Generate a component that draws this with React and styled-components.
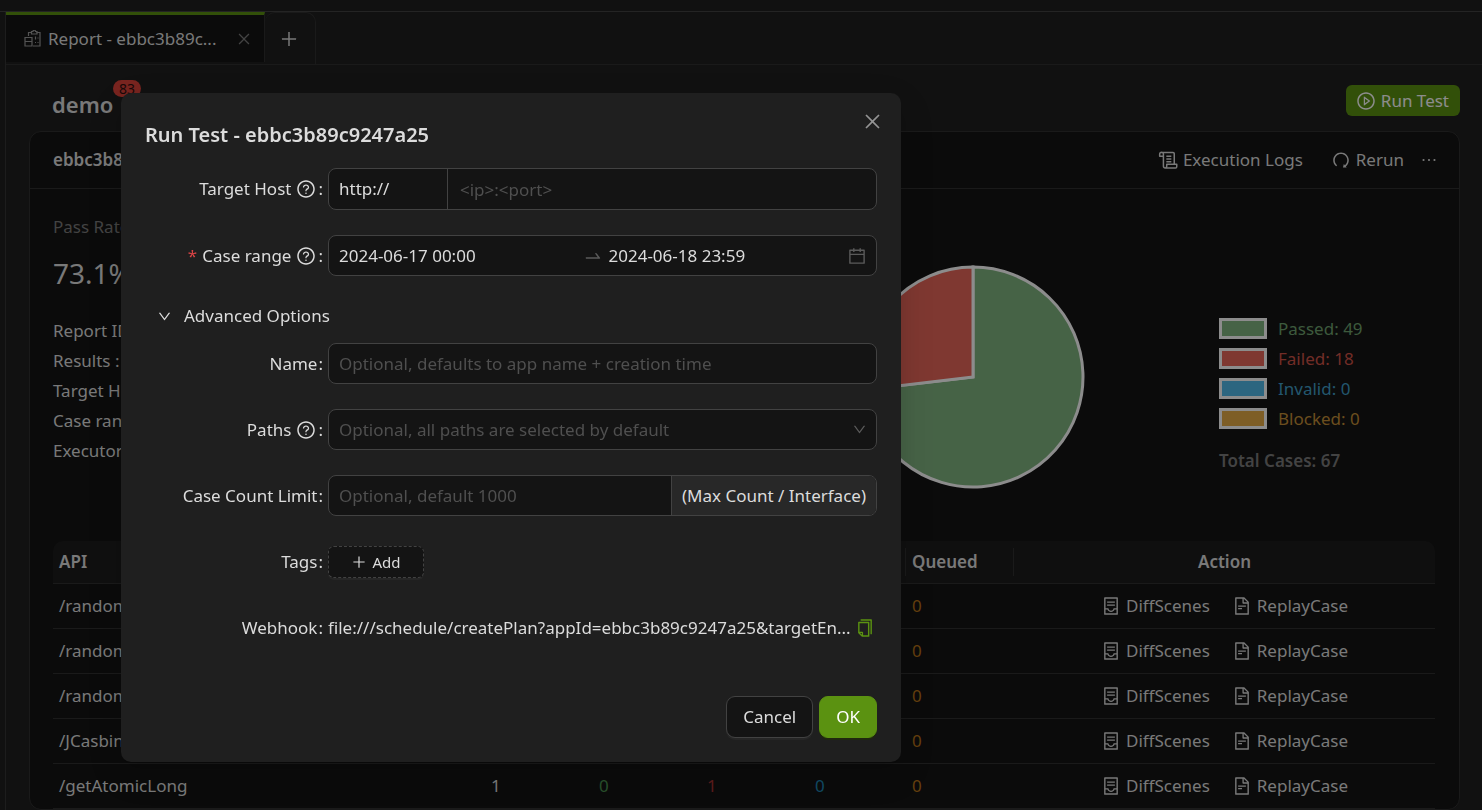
import React from "react";
import styled, { createGlobalStyle } from "styled-components";
import {
  AiOutlineCalendar,
  AiOutlineClose,
  AiOutlineContainer,
  AiOutlineCopy,
  AiOutlineDown,
  AiOutlineEllipsis,
  AiOutlineFileText,
  AiOutlinePlayCircle,
  AiOutlinePlus,
  AiOutlineQuestionCircle,
  AiOutlineRedo,
  AiOutlineSwapRight,
} from "react-icons/ai";

const GlobalStyle = createGlobalStyle`
  * { box-sizing: border-box; }
  body {
    margin: 0;
    background: #1f1f1f;
    color: #dcdcdc;
    font-family: "Noto Sans", "Open Sans", sans-serif;
    font-size: 17px;
    line-height: 28px;
  }
  button, input, select { font: inherit; color: inherit; }
  button { cursor: pointer; }
  svg { flex: none; display: block; }
`;

const Page = styled.div`
  height: 100vh;
  overflow: hidden;
  padding-left: 5px;
  display: flex;
  flex-direction: column;
`;

const TopStrip = styled.div`
  flex: none;
  height: 12px;
  margin-left: -5px;
  border-bottom: 1px solid #424242;
`;

const Workspace = styled.main`
  flex: 1;
  min-height: 0;
  border-left: 1px solid #363636;
`;

const TabBar = styled.div`
  display: flex;
  height: 53px;
  border-bottom: 1px solid #303030;
`;

const Tab = styled.div`
  display: flex;
  align-items: center;
  width: 259px;
  height: 50px;
  padding: 0 12px 0 18px;
  background: #141414;
  border-top: 3px solid #5b9211;
  border-right: 1px solid #303030;
`;

const TabLabel = styled.button`
  flex: 1;
  min-width: 0;
  display: flex;
  align-items: center;
  gap: 7px;
  padding: 0;
  border: 0;
  background: none;
`;

const IconButton = styled.button`
  display: flex;
  padding: 0;
  border: 0;
  background: none;
  color: ${(p) => p.$color || "#dcdcdc"};
`;

const AddTab = styled.button`
  display: flex;
  align-items: center;
  justify-content: center;
  width: 51px;
  padding: 0 3px 0 0;
  border: 1px solid #303030;
  border-width: 1px 1px 0 0;
  border-radius: 10px 10px 0 0;
  background: none;
`;

const Content = styled.div`
  padding: 20px 22px 0 23px;
`;

const PageHeader = styled.header`
  display: flex;
  justify-content: space-between;
  height: 46px;
`;

const AppTitle = styled.h1`
  position: relative;
  margin: 3px 0 0 23px;
  height: 32px;
  font-size: 22px;
  line-height: 32px;
  font-weight: 600;
`;

const Badge = styled.sup`
  position: absolute;
  left: 61px;
  top: -8px;
  padding: 0 6px;
  border-radius: 9px;
  background: #dc4239;
  color: #2c1010;
  font-size: 14px;
  font-weight: 400;
  line-height: 17px;
`;

const RunButton = styled.button`
  display: flex;
  align-items: center;
  gap: 5px;
  height: 31px;
  padding: 0 11px 0 10px;
  border: 0;
  border-radius: 6px;
  background: #5b9211;
  color: #fff;
`;

const Card = styled.section`
  border: 1px solid #303030;
  border-radius: 12px;
  background: #141414;
`;

const CardHeader = styled.header`
  display: flex;
  align-items: center;
  justify-content: space-between;
  height: 57px;
  padding: 0 20px 0 23px;
  border-bottom: 1px solid #303030;
`;

const CardTitle = styled.h2`
  margin: 0;
  font-size: 17px;
  font-weight: 600;
`;

const Actions = styled.div`
  display: flex;
  align-items: center;
  justify-content: ${(p) => (p.$center ? "center" : "flex-end")};
  gap: ${(p) => p.$gap}px;
`;

const TextButton = styled.button`
  display: flex;
  align-items: center;
  gap: 5px;
  padding: 0;
  border: 0;
  background: none;
`;

const CardBody = styled.div`
  padding: 24px 24px 0 23px;
`;

const Summary = styled.div`
  display: flex;
  height: 328px;
`;

const Stats = styled.div`
  flex: 1;
`;

const StatTitle = styled.div`
  color: #7a7a7a;
`;

const StatValue = styled.div`
  margin: 12px 0 23px;
  font-size: 28px;
  line-height: 40px;
`;

const Details = styled.ul`
  margin: 0;
  padding: 0;
  list-style: none;
  line-height: 30px;
`;

const Chart = styled.div`
  display: flex;
  align-items: center;
  gap: 134px;
`;

const Legend = styled.div`
  width: 216px;
  padding-top: 34px;
`;

const LegendItem = styled.div`
  display: flex;
  align-items: center;
  gap: 11px;
  height: 30px;
  color: ${(p) => p.$color};
`;

const Swatch = styled.span`
  width: 48px;
  height: 21px;
  border: 3px solid #fff;
  background: ${(p) => p.$color};
`;

const Total = styled.div`
  margin-top: 13px;
  color: #7a7a7a;
  font-weight: 600;
`;

const Table = styled.table`
  width: 100%;
  table-layout: fixed;
  border-collapse: separate;
  border-spacing: 0;
`;

const HeadCell = styled.th`
  height: 43px;
  padding: 0 6px;
  background: #1d1d1d;
  border-bottom: 1px solid #303030;
  text-align: ${(p) => (p.$center ? "center" : "left")};
  font-weight: 600;
  &:first-child { border-top-left-radius: 10px; }
  &:last-child { border-top-right-radius: 10px; }
`;

const HeadLabel = styled.span`
  display: block;
  margin-right: -6px;
  border-right: ${(p) => (p.$divider ? "1px solid #303030" : "0")};
`;

const Cell = styled.td`
  height: 45px;
  padding: 0 6px;
  border-bottom: 1px solid #303030;
  color: ${(p) => p.$color || "#dcdcdc"};
`;

const Mask = styled.div`
  position: fixed;
  inset: 0;
  display: flex;
  align-items: flex-start;
  padding: 93px 0 0 121px;
  background: rgba(0, 0, 0, 0.45);
`;

const Modal = styled.div`
  position: relative;
  width: 780px;
  padding: 26px 24px 24px;
  border-radius: 10px;
  background: #1f1f1f;
  box-shadow: 0 8px 20px rgba(0, 0, 0, 0.1), 0 4px 8px -6px rgba(0, 0, 0, 0.15),
    0 12px 36px 10px rgba(0, 0, 0, 0.07);
`;

const ModalTitle = styled.h2`
  margin: 0 0 17px;
  font-size: 20px;
  line-height: 32px;
  font-weight: 600;
`;

const CloseCorner = styled.div`
  position: absolute;
  top: 18px;
  right: 18px;
`;

const Form = styled.form`
  display: grid;
  row-gap: 25px;
`;

const Field = styled.div`
  display: grid;
  grid-template-columns: 1fr 3fr;
  align-items: center;
  min-height: 41px;
`;

const Label = styled.label`
  display: flex;
  align-items: center;
  justify-content: flex-end;
  gap: 5px;
  padding-right: 5px;
`;

const Required = styled.span`
  color: #dc4446;
`;

const Colon = styled.span`
  margin-left: ${(p) => (p.$tight ? "-3px" : "-4px")};
`;

const Box = styled.div`
  position: relative;
  display: flex;
  align-items: center;
  height: ${(p) => (p.$tall ? "42px" : "41px")};
  border: 1px solid #424242;
  border-radius: 8px;
  background: #141414;
  overflow: hidden;
`;

const TextInput = styled.input`
  flex: 1;
  min-width: 0;
  height: 100%;
  padding: 0 10px;
  border: 0;
  outline: 0;
  background: none;
  &::placeholder { color: #4f4f4f; opacity: 1; }
`;

const Select = styled.select`
  width: ${(p) => p.$width || "100%"};
  height: 100%;
  padding: 0 10px;
  border: 0;
  outline: 0;
  appearance: none;
  background: none;
  color: ${(p) => (p.$placeholder ? "#4f4f4f" : "#dcdcdc")};
`;

const HostInput = styled(TextInput)`
  padding-left: 12px;
  border-left: 1px solid #424242;
`;

const RangeEnd = styled(TextInput)`
  flex: none;
  width: 50%;
  padding-left: 6px;
`;

const Suffix = styled.span`
  display: flex;
  color: #5a5a5a;
`;

const EndSuffix = styled(Suffix)`
  position: absolute;
  right: 9px;
  pointer-events: none;
`;

const Addon = styled.span`
  display: flex;
  align-items: center;
  height: 100%;
  padding: 0 10px;
  border-left: 1px solid #424242;
  background: #282828;
`;

const AdvancedToggle = styled.button`
  display: flex;
  align-items: center;
  gap: 12px;
  height: 30px;
  margin-bottom: -13px;
  padding: 0 0 0 12px;
  border: 0;
  background: none;
`;

const AddButton = styled.button`
  display: flex;
  align-items: center;
  justify-content: center;
  gap: 5px;
  width: 96px;
  height: 32px;
  padding: 0;
  border: 1px dashed #424242;
  border-radius: 6px;
  background: #141414;
  box-shadow: 0 2px 0 #262626;
  font-size: 15px;
`;

const Webhook = styled.div`
  display: flex;
  align-items: center;
  gap: 4px;
  white-space: nowrap;
`;

const Footer = styled.footer`
  display: flex;
  justify-content: flex-end;
  gap: 6px;
  margin-top: 48px;
`;

const Button = styled.button`
  height: 42px;
  padding: 0 16px;
  border: 1px solid ${(p) => (p.$primary ? "#5b9211" : "#424242")};
  border-radius: 9px;
  background: ${(p) => (p.$primary ? "#5b9211" : "#141414")};
  color: ${(p) => (p.$primary ? "#fff" : "#dcdcdc")};
  box-shadow: 0 2px 0 ${(p) => (p.$primary ? "#20280f" : "#262626")};
`;

function ReportIcon() {
  return (
    <svg width="17" height="17" viewBox="0 0 17 17" fill="none" stroke="#9a9a9a" strokeWidth="1.2">
      <path d="M4.5 6V2.5H7M12.500 2.500H16v13.500H9" />
      <path d="M7.500 4V1.500H9a1.200 1.200 0 0 1 2.500 0H13V4Z" />
      <path d="M1 7.500h7V16H1ZM1 11.500h7" />
      <path d="M11.500 6.500v3M11 12.500h1M13.500 12.500h1M13.500 8h1" />
    </svg>
  );
}

function LogsIcon() {
  return (
    <svg width="20" height="20" viewBox="0 0 24 24" fill="none" stroke="currentColor" strokeWidth="1.8" strokeLinejoin="round">
      <path d="M19.500 17V4.500a1.500 1.500 0 0 0-1.500-1.500H4M8 21.500h13a1.500 1.500 0 0 0 1.500-1.500v-3H10.500v2.500a2 2 0 0 1-4 0V5a2 2 0 1 0-4.500 0v2.500h4" />
      <path d="M10 7.500h6M10 10.700h6M10 14h6" />
    </svg>
  );
}

function PieChart({ passed, failed }) {
  const angle = (passed / (passed + failed)) * Math.PI * 2;
  const x = 112 + 110 * Math.sin(angle);
  const y = 112 - 110 * Math.cos(angle);
  return (
    <svg width="224" height="224" viewBox="0 0 224 224" stroke="#fff" strokeWidth="3">
      <path fill="#80b480" d={`M112 112V2A110 110 0 1 1 ${x} ${y}Z`} />
      <path fill="#e76659" d={`M112 112L${x} ${y}A110 110 0 0 1 112 2Z`} />
    </svg>
  );
}

const legend = [
  ["Passed", 49, "#80b480", "#6fa36f"],
  ["Failed", 18, "#e76659", "#d05348"],
  ["Invalid", 0, "#50bbe9", "#409fc8"],
  ["Blocked", 0, "#e5ab45", "#c48f38"],
];

const details = ["Report ID:", "Results :", "Target Host:", "Case range:", "Executor:"];

const columns = ["Cases", "Passed", "Failed", "Invalid", "Queued"];

const rows = [
  ["/randomInt", 1, 1, 0, 0, 0],
  ["/randomLong", 1, 1, 0, 0, 0],
  ["/randomUser", 1, 1, 0, 0, 0],
  ["/JCasbin", 1, 1, 0, 0, 0],
  ["/getAtomicLong", 1, 0, 1, 0, 0],
];

const countColors = ["#dcdcdc", "#49914f", "#a83232", "#1f86b4", "#b87318"];

function FormField({ label, htmlFor, help, required, children }) {
  return (
    <Field>
      <Label htmlFor={htmlFor}>
        {required && <Required>*</Required>}
        {label}
        {help && <AiOutlineQuestionCircle size={20} />}
        <Colon $tight={help}>:</Colon>
      </Label>
      {children}
    </Field>
  );
}

function RunTestModal() {
  return (
    <Mask>
      <Modal role="dialog" aria-labelledby="run-test-title">
        <ModalTitle id="run-test-title">Run Test - ebbc3b89c9247a25</ModalTitle>
        <CloseCorner>
          <IconButton aria-label="Close" $color="#949494">
            <AiOutlineClose size={21} />
          </IconButton>
        </CloseCorner>
        <Form onSubmit={(e) => e.preventDefault()}>
          <FormField label="Target Host" htmlFor="host" help>
            <Box $tall>
              <Select aria-label="Protocol" $width="118px">
                <option>http://</option>
                <option>https://</option>
              </Select>
              <HostInput id="host" placeholder="<ip>:<port>" />
            </Box>
          </FormField>
          <FormField label="Case range" htmlFor="range-start" help required>
            <Box>
              <TextInput id="range-start" defaultValue="2024-06-17 00:00" />
              <Suffix>
                <AiOutlineSwapRight size={20} />
              </Suffix>
              <RangeEnd aria-label="Range end" defaultValue="2024-06-18 23:59" />
              <EndSuffix>
                <AiOutlineCalendar size={20} />
              </EndSuffix>
            </Box>
          </FormField>
          <AdvancedToggle type="button" aria-expanded="true">
            <AiOutlineDown size={15} />
            Advanced Options
          </AdvancedToggle>
          <FormField label="Name" htmlFor="name">
            <Box>
              <TextInput id="name" placeholder="Optional, defaults to app name + creation time" />
            </Box>
          </FormField>
          <FormField label="Paths" htmlFor="paths" help>
            <Box>
              <Select id="paths" $placeholder>
                <option>Optional, all paths are selected by default</option>
              </Select>
              <EndSuffix>
                <AiOutlineDown size={15} />
              </EndSuffix>
            </Box>
          </FormField>
          <FormField label="Case Count Limit" htmlFor="limit">
            <Box>
              <TextInput id="limit" placeholder="Optional, default 1000" />
              <Addon>(Max Count / Interface)</Addon>
            </Box>
          </FormField>
          <FormField label="Tags" htmlFor="add-tag">
            <AddButton id="add-tag" type="button">
              <AiOutlinePlus size={16} />
              Add
            </AddButton>
          </FormField>
          <FormField label="Webhook">
            <Webhook>
              file:///schedule/createPlan?appId=ebbc3b89c9247a25&amp;targetEn...
              <IconButton type="button" aria-label="Copy" $color="#5b9211">
                <AiOutlineCopy size={20} />
              </IconButton>
            </Webhook>
          </FormField>
        </Form>
        <Footer>
          <Button type="button">Cancel</Button>
          <Button type="button" $primary>OK</Button>
        </Footer>
      </Modal>
    </Mask>
  );
}

export default function App() {
  return (
    <>
      <GlobalStyle />
      <Page>
        <TopStrip />
        <Workspace>
          <TabBar>
            <Tab>
              <TabLabel>
                <ReportIcon />
                Report - ebbc3b89c...
              </TabLabel>
              <IconButton aria-label="Close tab" $color="#7a7a7a">
                <AiOutlineClose size={16} />
              </IconButton>
            </Tab>
            <AddTab aria-label="Add tab">
              <AiOutlinePlus size={20} />
            </AddTab>
          </TabBar>
          <Content>
            <PageHeader>
              <AppTitle>
                demo
                <Badge>83</Badge>
              </AppTitle>
              <RunButton>
                <AiOutlinePlayCircle size={20} />
                Run Test
              </RunButton>
            </PageHeader>
            <Card>
              <CardHeader>
                <CardTitle>ebbc3b89c9247a25</CardTitle>
                <Actions $gap={15}>
                  <Actions $gap={28}>
                    <TextButton>
                      <LogsIcon />
                      Execution Logs
                    </TextButton>
                    <TextButton>
                      <AiOutlineRedo size={20} />
                      Rerun
                    </TextButton>
                  </Actions>
                  <IconButton aria-label="More">
                    <AiOutlineEllipsis size={20} />
                  </IconButton>
                </Actions>
              </CardHeader>
              <CardBody>
                <Summary>
                  <Stats>
                    <StatTitle>Pass Rate</StatTitle>
                    <StatValue>73.1%</StatValue>
                    <Details>
                      {details.map((d) => (
                        <li key={d}>{d}</li>
                      ))}
                    </Details>
                  </Stats>
                  <Chart>
                    <PieChart passed={49} failed={18} />
                    <Legend>
                      {legend.map(([name, count, fill, text]) => (
                        <LegendItem key={name} $color={text}>
                          <Swatch $color={fill} />
                          {name}: {count}
                        </LegendItem>
                      ))}
                      <Total>Total Cases: 67</Total>
                    </Legend>
                  </Chart>
                </Summary>
                <Table>
                  <colgroup>
                    <col />
                    <col width="108" />
                    <col width="108" />
                    <col width="108" />
                    <col width="97" />
                    <col width="108" />
                    <col width="421" />
                  </colgroup>
                  <thead>
                    <tr>
                      <HeadCell>
                        <HeadLabel $divider>API</HeadLabel>
                      </HeadCell>
                      {columns.map((c) => (
                        <HeadCell key={c}>
                          <HeadLabel $divider>{c}</HeadLabel>
                        </HeadCell>
                      ))}
                      <HeadCell $center>Action</HeadCell>
                    </tr>
                  </thead>
                  <tbody>
                    {rows.map(([api, ...counts]) => (
                      <tr key={api}>
                        <Cell>{api}</Cell>
                        {counts.map((n, i) => (
                          <Cell key={columns[i]} $color={countColors[i]}>{n}</Cell>
                        ))}
                        <Cell>
                          <Actions $center $gap={22}>
                            <TextButton>
                              <AiOutlineContainer size={20} />
                              DiffScenes
                            </TextButton>
                            <TextButton>
                              <AiOutlineFileText size={20} />
                              ReplayCase
                            </TextButton>
                          </Actions>
                        </Cell>
                      </tr>
                    ))}
                  </tbody>
                </Table>
              </CardBody>
            </Card>
          </Content>
        </Workspace>
      </Page>
      <RunTestModal />
    </>
  );
}
